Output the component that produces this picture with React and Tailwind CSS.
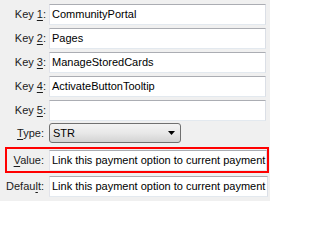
import React from 'react';

const boxBorder = 'border border-t-[#abadb3] border-l-[#e2e3ea] border-r-[#dbdfe6] border-b-[#e3e9ef] bg-white';

const Label = ({ pre, u, post, className = '' }) => (
  <span className={`text-right whitespace-nowrap text-[#1b1b1b] ${className}`}>
    {pre}<u className="underline underline-offset-[2px] decoration-[1px]">{u}</u>{post}
  </span>
);

const TextBox = ({ value, className = '' }) => (
  <div className={`${boxBorder} h-[21px] flex items-center pl-[2px] overflow-hidden whitespace-nowrap text-black ${className}`}>
    {value}
  </div>
);

const App = () => {
  const keys = ['CommunityPortal', 'Pages', 'ManageStoredCards', 'ActivateButtonTooltip', ''];
  const text = 'Link this payment option to current payment';

  return (
    <div
      className="w-[270px] h-[201px] bg-[#f0f0f0] pt-[4px] text-[11px] leading-none overflow-hidden"
      style={{ fontFamily: '"Liberation Sans", Arial, sans-serif' }}
    >
      {keys.map((k, i) => (
        <div key={i} className="flex items-center h-[21px] mb-[3px]">
          <Label pre="Key " u={String(i + 1)} post=":" className="w-[46px]" />
          <TextBox value={k} className="ml-[3px] w-[217px]" />
        </div>
      ))}

      <div className="flex items-center h-[20px] mt-[-1px]">
        <Label pre="" u="T" post="ype:" className="w-[44px]" />
        <div className="ml-[5px] w-[132px] h-[20px] rounded-[3px] border border-[#707070] bg-gradient-to-b from-[#f3f3f3] via-[#e8e8e8] to-[#d3d3d3] flex items-center justify-between pl-[3px] pr-[5px] text-black">
          <span>STR</span>
          <svg width="7" height="4" viewBox="0 0 7 4">
            <path d="M0 0h7L3.5 4z" fill="#000" />
          </svg>
        </div>
      </div>

      <div className="ml-[5px] mt-[4px] w-[264px] h-[26px] border-2 border-[#ff0000] flex items-center">
        <Label pre="" u="V" post="alue:" className="w-[37px]" />
        <TextBox value={text} className="ml-[5px] w-[218px]" />
      </div>

      <div className="flex items-center h-[21px] mt-[3px]">
        <Label pre="Defau" u="l" post="t:" className="w-[44px]" />
        <TextBox value={text} className="ml-[5px] w-[219px]" />
      </div>
    </div>
  );
};

export default App;
